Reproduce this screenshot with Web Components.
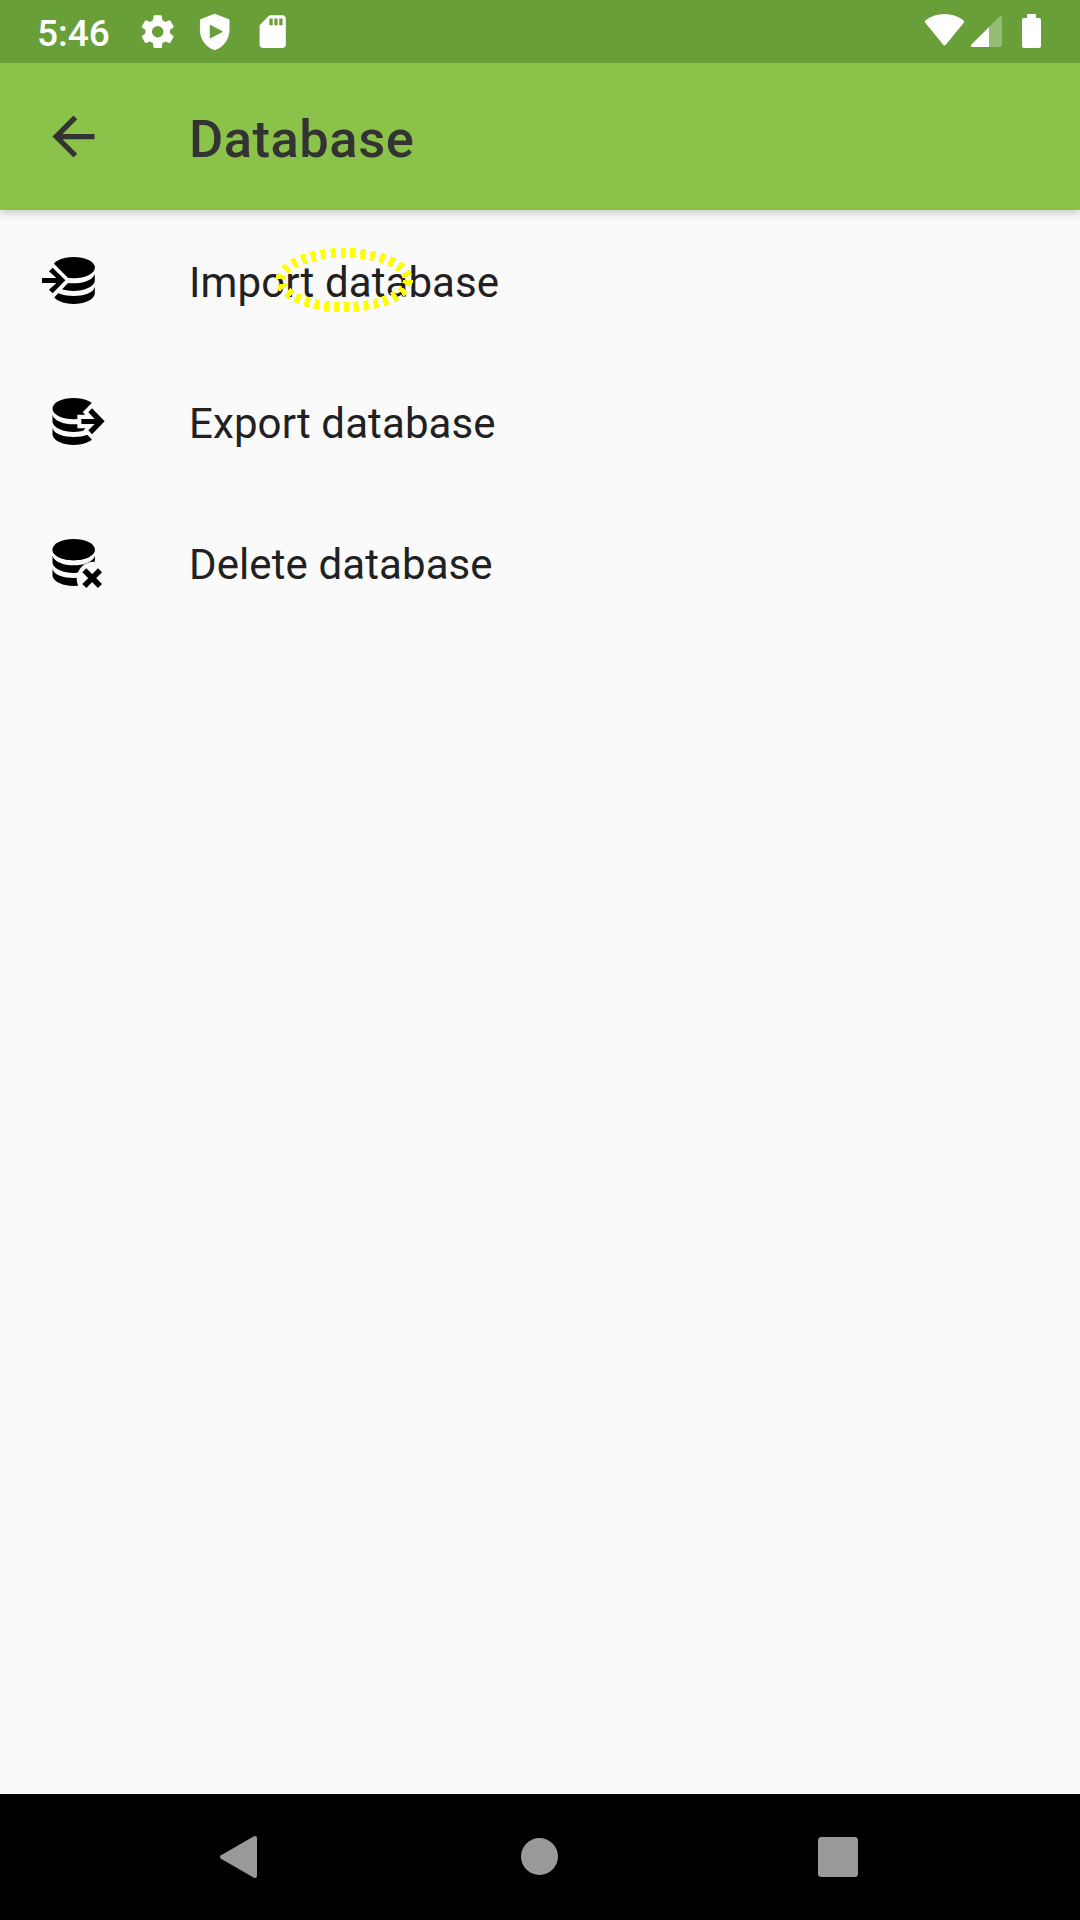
<!DOCTYPE html>
<html lang="en">
<head>
<meta charset="utf-8">
<title>Database</title>
<style>
html,body{margin:0;padding:0}
body{width:1080px;height:1920px;overflow:hidden;background:#fafafa;font-family:Roboto,"Noto Sans",sans-serif}
</style>
</head>
<body>
<database-screen></database-screen>
<script>
const define = (name, html) => {
  const template = document.createElement('template');
  template.innerHTML = html;
  customElements.define(name, class extends HTMLElement {
    constructor() {
      super();
      this.attachShadow({mode: 'open'}).append(template.content.cloneNode(true));
    }
  });
};

define('status-bar', `
<style>
:host{display:flex;box-sizing:border-box;height:63px;background:#689f38;color:#fff;justify-content:space-between;padding:0 32px 0 37px}
.left,.right{display:flex;align-items:center}
time{font-size:37px;font-weight:500;line-height:43px;width:100.500px;padding-top:3px;white-space:nowrap}
svg{display:block;fill:#fff}
.left svg{width:39.4px;height:39.4px;margin-right:18.6px}
</style>
<div class="left">
  <time>5:46</time>
  <svg viewBox="0 0 24 24"><path d="M19.43 12.98c.04-.32.07-.64.07-.98s-.03-.66-.07-.98l2.11-1.65c.19-.15.24-.42.12-.64l-2-3.46c-.12-.22-.39-.3-.61-.22l-2.49 1c-.52-.4-1.08-.73-1.69-.98l-.38-2.65C14.46 2.18 14.25 2 14 2h-4c-.25 0-.46.18-.49.42l-.38 2.65c-.61.25-1.17.59-1.69.98l-2.49-1c-.23-.09-.49 0-.61.22l-2 3.46c-.13.22-.07.49.12.64l2.11 1.65c-.04.32-.07.65-.07.98s.03.66.07.98l-2.11 1.65c-.19.15-.24.42-.12.64l2 3.46c.12.22.39.3.61.22l2.49-1c.52.4 1.08.73 1.69.98l.38 2.65c.03.24.24.42.49.42h4c.25 0 .46-.18.49-.42l.38-2.65c.61-.25 1.17-.59 1.69-.98l2.49 1c.23.09.49 0 .61-.22l2-3.46c.12-.22.07-.49-.12-.64zM12 15.5a3.5 3.5 0 1 1 0-7 3.5 3.5 0 0 1 0 7z"/></svg>
  <svg viewBox="0 0 24 24"><path fill-rule="evenodd" d="M12 1 3.6 4.3Q3 4.6 3 5.2V11c0 5.6 3.5 10.2 8.3 12q.7.25 1.4 0C17.5 21.2 21 16.600 21 11V5.200q0-.6-.6-.9ZM9 8.100v7.700q0 .5.500.250l7-3.750q.6-.35 0-.7l-7-3.750q-.5-.25-.5.250Z"/></svg>
  <svg viewBox="0 0 24 24"><path d="M18 2h-8L4.020 8 4 20c0 1.100.9 2 2 2h12c1.100 0 2-.9 2-2V4c0-1.100-.9-2-2-2zm-6 6h-2V4h2zm3 0h-2V4h2zm3 0h-2V4h2z"/></svg>
</div>
<div class="right">
  <svg width="128" height="63" viewBox="920 0 128 63">
    <path d="M925.300 22.800Q924 21.500 925.600 20.200Q934 14 944.500 14T963.400 20.200Q965 21.500 963.800 22.800L946 44.500Q944.500 46.500 943 44.500Z"/>
    <path opacity=".3" d="M989 27L999.500 16.500Q1002 15 1002 18V45Q1002 47 1000 47H989Z"/>
    <path d="M989 27V47H972.500Q970 46.500 971.500 44.500Z"/>
    <path d="M1027 14H1036V18H1039Q1041 18 1041 20V46Q1041 48 1039 48H1024Q1022 48 1022 46V20Q1022 18 1024 18H1027Z"/>
  </svg>
</div>`);

define('app-bar', `
<style>
:host{display:flex;align-items:center;box-sizing:border-box;height:147px;background:#8bc34a;color:#333;padding-left:42px;box-shadow:0 3px 9px rgba(0,0,0,.2)}
svg{display:block;width:63px;height:63px;fill:#333}
h1{margin:0;padding:5px 0 0 84px;font-size:52.5px;line-height:62px;font-weight:500;letter-spacing:.5px;white-space:nowrap}
</style>
<svg viewBox="0 0 24 24"><path d="M20 11H7.830l5.590-5.590L12 4l-8 8 8 8 1.410-1.410L7.830 13H20z"/></svg>
<h1><slot></slot></h1>`);

define('list-row', `
<style>
:host{display:flex;align-items:center;height:141px;padding-left:30px;color:#212121;font-size:42px;line-height:50px}
.icon{display:flex;width:90px;margin-right:69px}
.label{padding-top:4px;letter-spacing:.1px;white-space:nowrap}
</style>
<span class="icon"><slot name="icon"></slot></span><span class="label"><slot></slot></span>`);

/* Three-disc cylinder shared by the database icons; 1px = 3 units. */
const discs = x => `<g transform="translate(${x} 0)">
<ellipse cx="64" cy="173" rx="63.500" ry="32"/>
<path d="M.5 191C5 209 34 220 64 220S123 209 127.500 191V214C123 232 94 243 64 243S5 232 .5 214Z"/>
<path d="M.5 231C5 249 34 258 64 258S123 249 127.500 231V252C123 271 94 282 64 282S5 271 .5 252Z"/></g>`;
const icon = body => `<style>:host{display:block}svg{display:block}</style><svg width="90" height="141" viewBox="0 0 270 423">${body}</svg>`;

define('import-icon', icon(`
<clipPath id="c"><path d="M72 130H200V290H60L72 263L115 218V205L72 161Z"/></clipPath>
<g clip-path="url(#c)">${discs(67)}</g>
<path d="M36 204H79L57 184L68 173L106 211L68 250L57 239L79 219H36Z"/>`));

define('export-icon', icon(`
<clipPath id="c"><path d="M60 130H200L185 156L158 184L166 191H142V232H166L160 239L187 267V290H60Z"/></clipPath>
<g clip-path="url(#c)">${discs(67)}</g>
<path d="M154 204H194L175 184L186 172L224 211L186 250L175 238L194 219H154Z"/>`));

define('delete-icon', icon(`
${discs(67)}
<circle cx="191" cy="260" r="51" fill="#fafafa"/>
<path d="M67.500 173a63.500 32 0 0 0 127 0Z"/>
<path fill="none" stroke="#000" stroke-width="17" d="M163 235L210 282M210 235L163 282"/>`));

define('nav-bar', `
<style>
:host{display:flex;box-sizing:border-box;height:126px;background:#000;padding:0 90px}
span{flex:1;display:flex;align-items:center;justify-content:center}
svg{display:block;fill:#999}
</style>
<span><svg width="60" height="126" viewBox="210 1794 60 126"><path d="M221 1855.200L253.500 1836.600Q257 1835 257 1838.500V1875.500Q257 1879 253.500 1877.400L221 1858.800Q219 1857 221 1855.200Z"/></svg></span>
<span><svg width="60" height="126" viewBox="510 1794 60 126"><circle cx="539.500" cy="1856.500" r="18.500"/></svg></span>
<span><svg width="60" height="126" viewBox="810 1794 60 126"><rect x="818" y="1837" width="40" height="40" rx="3.500"/></svg></span>`);

define('target-marker', `
<style>
:host{display:block;position:absolute;left:270px;top:240px}
svg{display:block}
</style>
<svg width="150" height="80" viewBox="270 240 150 80" shape-rendering="crispEdges"><ellipse cx="344.300" cy="280" rx="63.500" ry="27" fill="none" stroke="#ff0" stroke-width="10" stroke-dasharray="4.950 4.950"/></svg>`);

define('database-screen', `
<style>
:host{display:flex;flex-direction:column;position:relative;width:1080px;height:1920px;background:#fafafa}
main{flex:1}
status-bar{z-index:2}
app-bar{z-index:1}
</style>
<status-bar></status-bar>
<app-bar>Database</app-bar>
<main>
  <list-row><import-icon slot="icon"></import-icon>Import database</list-row>
  <list-row><export-icon slot="icon"></export-icon>Export database</list-row>
  <list-row><delete-icon slot="icon"></delete-icon>Delete database</list-row>
</main>
<nav-bar></nav-bar>
<target-marker></target-marker>`);
</script>
</body>
</html>
